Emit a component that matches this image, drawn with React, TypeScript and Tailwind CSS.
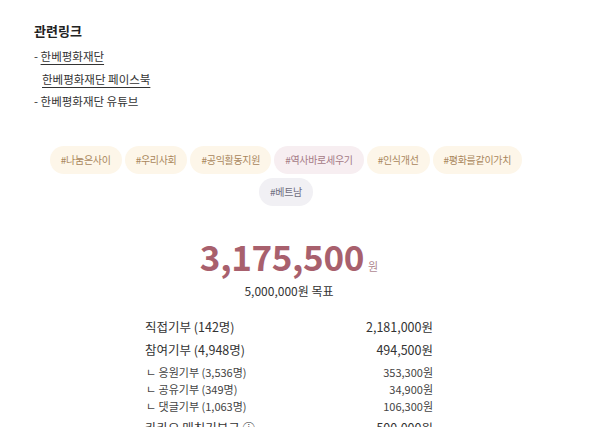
const tags = [
  { label: "#나눔은사이", tone: "warm" },
  { label: "#우리사회", tone: "warm" },
  { label: "#공익활동지원", tone: "warm" },
  { label: "#역사바로세우기", tone: "pink" },
  { label: "#인식개선", tone: "warm" },
  { label: "#평화를같이가치", tone: "warm" },
  { label: "#베트남", tone: "gray" },
];

const toneClass: Record<string, string> = {
  warm: "bg-[#fdf6e9] text-[#a9865c]",
  pink: "bg-[#f7eef1] text-[#a57a86]",
  gray: "bg-[#f1f0f4] text-[#6f6e82]",
};

const rows = [
  { label: "직접기부 (142명)", value: "2,181,000원", sub: false },
  { label: "참여기부 (4,948명)", value: "494,500원", sub: false },
  { label: "ㄴ 응원기부 (3,536명)", value: "353,300원", sub: true },
  { label: "ㄴ 공유기부 (349명)", value: "34,900원", sub: true },
  { label: "ㄴ 댓글기부 (1,063명)", value: "106,300원", sub: true },
];

export default function App() {
  return (
    <div
      className="w-[600px] h-[427px] overflow-hidden bg-white text-[#222]"
      style={{ fontFamily: '"Noto Sans CJK KR", "Noto Sans", sans-serif' }}
    >
      <div className="pl-[34px] pr-[56px] pt-[21px]">
        <h3 className="text-[13px] font-bold leading-5 text-[#222]">관련링크</h3>
        <ul className="mt-[4px] flex flex-col text-[11.5px] leading-[22.5px] text-[#333]">
          <li>
            - <span className="underline underline-offset-[3px]">한베평화재단</span>
          </li>
          <li className="pl-[8px]">
            <span className="underline underline-offset-[3px]">한베평화재단 페이스북</span>
          </li>
          <li>- 한베평화재단 유튜브</li>
        </ul>

        <div className="mt-[33px] flex flex-wrap justify-center gap-x-[3px] gap-y-[4px] pr-[6px]">
          {tags.map((t) => (
            <span
              key={t.label}
              className={`h-[28px] rounded-full px-[11px] text-[10px] leading-[28px] tracking-[-0.03em] ${toneClass[t.tone]}`}
            >
              {t.label}
            </span>
          ))}
        </div>

        <div className="mt-[28px] flex flex-col items-center">
          <div className="flex items-baseline">
            <span className="text-[35px] font-bold leading-[44px] tracking-[-0.01em] text-[#a8606d]">
              3,175,500
            </span>
            <span className="ml-[4px] text-[11px] text-[#b08a92]">원</span>
          </div>
          <p className="mt-[3px] text-[12px] leading-5 text-[#333]">5,000,000원 목표</p>
        </div>

        <div className="mx-auto mt-[14px] w-[288px]">
          {rows.map((r, i) => (
            <div
              key={r.label}
              className={`flex justify-between ${
                r.sub
                  ? "h-[17px] text-[11px] leading-[17px] text-[#444]"
                  : "h-[23px] text-[12.5px] leading-[23px] text-[#333]"
              } ${i === 2 ? "mt-[3px]" : ""}`}
            >
              <span className={r.sub ? "pl-[1px]" : ""}>{r.label}</span>
              <span>{r.value}</span>
            </div>
          ))}
          <div className="mt-[3px] flex justify-between text-[12.5px] leading-[20px] text-[#333]">
            <span>카카오 매칭기부금 ⓘ</span>
            <span>500,000원</span>
          </div>
        </div>
      </div>
    </div>
  );
}
